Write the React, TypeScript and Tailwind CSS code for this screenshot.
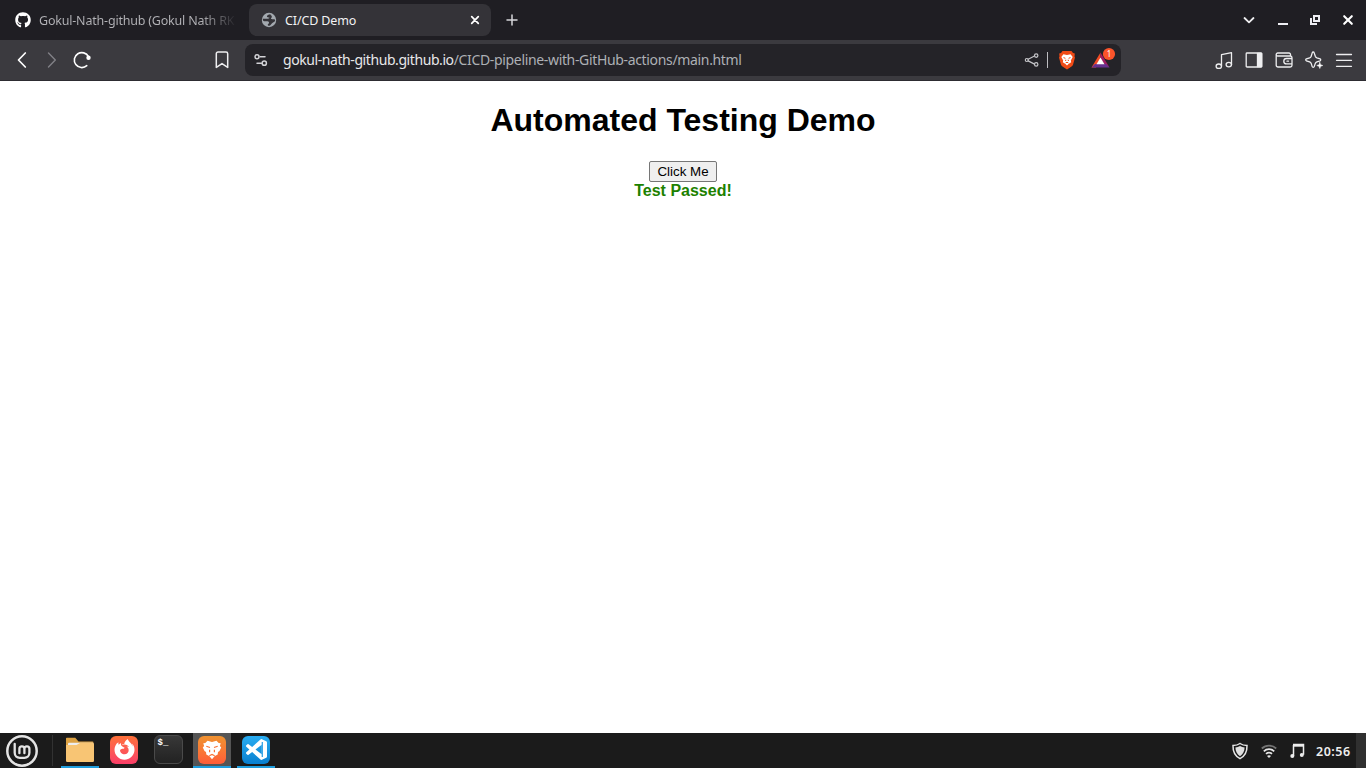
import type { ReactNode } from "react";
import { FaGithub, FaFirefoxBrowser } from "react-icons/fa";

function Cell({ children }: { children: ReactNode }) {
  return <button className="flex h-[30px] w-[30px] shrink-0 items-center justify-center">{children}</button>;
}

function Line({ d, w = 20, stroke = 1.5, color = "#eeeef0", children }: { d: string; w?: number; stroke?: number; color?: string; children?: ReactNode }) {
  return (
    <svg width={w} height={w} viewBox="0 0 20 20" fill="none" stroke={color} strokeWidth={stroke} strokeLinejoin="round" strokeLinecap="round" className="block shrink-0">
      <path d={d} />
      {children}
    </svg>
  );
}

function TabStrip() {
  return (
    <header className="flex h-10 items-center bg-[#1f1e23] font-['Noto_Sans',sans-serif] text-[12.5px] leading-5">
      <div className="flex w-[249px] items-center pl-[15px]">
        <FaGithub size={16} color="#ffffff" className="shrink-0" />
        <span className="ml-2 w-[198px] overflow-hidden whitespace-nowrap bg-linear-to-r from-[#b4b4b8] from-82% to-transparent to-100% bg-clip-text pt-px tracking-[-0.2px] text-transparent">
          Gokul-Nath-github (Gokul Nath RK
        </span>
      </div>
      <div className="flex h-8 w-[242px] items-center rounded-lg bg-[#343338] pl-3 pr-[9px]">
        <svg width="16" height="16" viewBox="0 0 16 16" className="block shrink-0">
          <circle cx="8" cy="8" r="7.200" fill="#a3a9af" />
          <path d="M9.500 2.200C7.500 2.300 5.800 3.300 5.900 4.500c.1 1 1.600.7 2.300 1.100.6.500-.2 1.100-1.200 1.200H1.900c-.3 1.300.3 2.400 1.300 2.400h3.300c1.100.2 1.600.7 1.500 1.700-.1.700-1 .8-1.200 1.600-.2.900.6 1.600 1.700 1.300 1.300-.4 1.700-2 2.800-2.800.9-.7 2.500-.9 2.800-2.400.1-.9-.7-1.400-1.700-1.300-1 0-2.200.1-2.400-.7-.2-.6.700-.9.800-1.700.1-.9-.4-1.600-1.300-1.800z" fill="#343338" />
        </svg>
        <span className="ml-2 pt-px tracking-[-0.12px] text-[#f2f2f4]">CI/CD Demo</span>
        <span className="ml-auto flex h-[14px] w-[14px] items-center justify-center">
          <Line d="M5.300 5.300l9.400 9.400M14.700 5.300l-9.400 9.400" w={14} stroke={2.500} color="#ffffff" />
        </span>
      </div>
      <div className="ml-[11px]">
        <Line d="M10 5v10M5 10h10" stroke={1.5} color="#d6d6da" />
      </div>
      <div className="ml-auto flex items-center pr-2">
        <div className="mr-[14px]">
          <Line d="M4.500 8l4.500 4.300L13.500 8" stroke={1.8} />
        </div>
        <div className="mr-3">
          <svg width="20" height="20" viewBox="0 0 20 20" className="block"><path d="M4 13h10v2H4z" fill="#eeeef3" /></svg>
        </div>
        <div className="mr-3">
          <svg width="20" height="20" viewBox="0 0 20 20" fill="none" stroke="#eeeef3" strokeWidth="2" className="block">
            <path d="M8 6h5v5H8zM5 8v6h6" />
          </svg>
        </div>
        <Line d="M6.200 6.200l7.600 7.600M13.800 6.200l-7.600 7.600" stroke={2.100} color="#ffffff" />
      </div>
    </header>
  );
}

function AddressBar() {
  return (
    <div className="ml-2 flex h-8 w-[876px] items-center rounded-lg bg-[#242328] pl-1.5 pr-[3px]">
      <Line d="M9.200 6.800H14M6 13.200h4.500" stroke={1.500} color="#d2d2d6">
        <circle cx="6" cy="6.800" r="2" />
        <circle cx="13.300" cy="13.200" r="2.100" />
      </Line>
      <span className="ml-3 whitespace-nowrap font-['Noto_Sans',sans-serif] text-[14px] leading-5 tracking-[-0.34px] text-[#adb0b5]">
        <span className="tracking-[-0.42px] text-[#e8e8ea]">gokul-nath-github.github.io</span>/CICD-pipeline-with-GitHub-actions/main.html
      </span>
      <div className="ml-auto flex items-center">
        <Line d="M6.200 9.200l5.800-3M6.200 10.900l5.800 3" stroke={1.200} color="#c6c6ca">
          <circle cx="4.800" cy="10" r="1.500" />
          <circle cx="14.200" cy="5.600" r="1.700" />
          <circle cx="14.200" cy="14.400" r="1.700" />
        </Line>
        <div className="ml-[5px] h-4 w-px bg-[#bdbdc1]" />
        <svg width="18" height="20" viewBox="0 0 18 20" className="ml-2.5 block">
          <path d="M4.500 1h9l1.500 2 1.800.5-.3 3 .5 1-2 7.300c-.5 1.500-3.500 3.200-6 4.700-2.500-1.500-5.500-3.200-6-4.700L1 7.500l.5-1-.3-3L3 3z" fill="#f04b16" />
          <path d="M5.400 4.300L9 4.900l3.600-.6L14.700 7l-1.900 3.500.4 1.800-2.700 1.700-1.500 1.500-1.500-1.500-2.700-1.700.4-1.800L3.300 7z" fill="#fff" />
          <path d="M5.500 7.600l1.900.7M12.500 7.600l-1.900.7M7.800 9.700L7.600 11M10.200 9.700l.2 1.300M7.700 12.800L9 12.300l1.300.5" stroke="#f04b16" strokeWidth="1" fill="none" />
        </svg>
        <svg width="28" height="26" viewBox="0 0 28 26" className="ml-[14px] block">
          <path d="M10.500 5.500L1.500 20.500H6l4.500-8.500z" fill="#f04b24" />
          <path d="M10.500 5.500L19.500 20.500l-4.500-3-4.500-5.500z" fill="#a01b63" />
          <path d="M1.500 20.500L5 17h11l3.500 3.500z" fill="#66308f" />
          <path d="M10.500 10.500L6.500 17.200h8z" fill="#fff" />
          <circle cx="19" cy="7" r="6.100" fill="#fb542b" />
          <text x="19" y="10" textAnchor="middle" fontSize="8" fontFamily="Noto Sans" fill="#fff">1</text>
        </svg>
      </div>
    </div>
  );
}

function Toolbar() {
  return (
    <nav className="flex h-[41px] items-center border-b border-[#2d2c31] bg-[#3b3a3f] pl-[7px]">
      <Cell><Line d="M13.300 3L6.500 10l6.800 7" stroke={1.700} color="#ffffff" /></Cell>
      <Cell><Line d="M6.500 3l6.800 7-6.800 7" stroke={1.400} color="#818086" /></Cell>
      <Cell>
        <Line d="M14.800 15.700a7.500 7.500 0 1 1 1.700-9" stroke={1.600} color="#ffffff">
          <circle cx="16.500" cy="7.800" r="1.400" fill="#fff" />
        </Line>
      </Cell>
      <div className="ml-[110px]"><Cell><Line d="M4.300 17.400V3.700A1.700 1.700 0 0 1 6 2h8a1.700 1.700 0 0 1 1.700 1.700v13.700L10 13.600z" /></Cell></div>
      <AddressBar />
      <div className="ml-auto flex pr-[7px]">
        <Cell>
          <Line d="M7.500 16V4.700l10-2v12" stroke={1.300}>
            <ellipse cx="4.800" cy="16.200" rx="2.700" ry="2.200" />
            <ellipse cx="14.800" cy="14.600" rx="2.700" ry="2.200" />
          </Line>
        </Cell>
        <Cell>
          <Line d="M3 3h14a.8.8 0 0 1 .8.8v12.400a.8.8 0 0 1-.8.8H3a.8.8 0 0 1-.8-.8V3.800A.8.8 0 0 1 3 3z" stroke={1.300}>
            <path d="M13.500 3.300h4v13.400h-4z" fill="#eeeef0" />
          </Line>
        </Cell>
        <Cell>
          <Line d="M16.500 5.700V4.500A1.500 1.500 0 0 0 15 3H3.700a1.500 1.500 0 0 0 0 3h12.500A1.800 1.800 0 0 1 18 7.800v7.400a1.800 1.800 0 0 1-1.800 1.800H4a1.800 1.800 0 0 1-1.800-1.800V4.500M18 8.500h-5.500a2.700 2.700 0 0 0 0 5.400H18M13 11.200h1.500" stroke={1.300} />
        </Cell>
        <Cell>
          <Line d="M9.200 2c.6 0 .8.300 1 .9l1.100 3.300c.3.800.8 1.300 1.600 1.600l3.200 1.100c.8.300.8 1.600 0 1.900l-3.200 1c-.8.300-1.300.8-1.600 1.600l-1.100 3.200c-.3.900-1.700.9-2 0l-1-3.200c-.3-.8-.8-1.300-1.600-1.600l-3.200-1c-.9-.3-.9-1.600 0-1.900l3.200-1.100c.8-.3 1.300-.8 1.600-1.600l1-3.300c.2-.6.400-.9 1-.9z" stroke={1.300}>
            <path d="M15.800 12.500l.8 2.200 2.200.8-2.200.8-.8 2.200-.8-2.200-2.200-.8 2.200-.8z" fill="#fff" strokeWidth=".6" />
          </Line>
        </Cell>
        <Cell><Line d="M2.500 4.500h15M2.500 10.300h15M2.500 16.300h15" stroke={1.300} /></Cell>
      </div>
    </nav>
  );
}

function Task({ open, active, children }: { open?: boolean; active?: boolean; children: ReactNode }) {
  return (
    <div className={`mr-1.5 flex h-[35px] w-[38px] flex-col items-center pt-[2px] ${active ? "bg-[#555555]" : ""}`}>
      <div className="flex h-[29px] w-[30px] shrink-0 items-center justify-center">{children}</div>
      <div className={`mt-[2px] h-[2px] w-full shrink-0 ${open ? "bg-[#1f9ede]" : ""}`} />
    </div>
  );
}

function Taskbar() {
  return (
    <footer className="flex h-[35px] items-center bg-[#1b1b1b]">
      <div className="flex h-8 w-11 items-center pl-[6px]">
        <svg width="32" height="32" viewBox="0 0 32 32" fill="none" stroke="#e4e4e4" className="block shrink-0">
          <circle cx="16" cy="16" r="14.700" strokeWidth="2.500" />
          <path d="M8.700 9v8.800a5 5 0 0 0 5 5h4.700a5 5 0 0 0 5-5v-4a2.500 2.500 0 0 0-5 0v4.400m0-4.400a2.500 2.500 0 0 0-5 0v4.400" strokeWidth="2.300" strokeLinecap="round" />
        </svg>
      </div>
      <div className="ml-2 mr-2 h-[31px] w-px bg-[#323232]" />
      <Task open>
        <svg width="30" height="28" viewBox="0 0 30 28" className="block">
          <path d="M1 2.500a.8.800 0 0 1 .8-.8h8.500l3.200 3.800h14a1 1 0 0 1 1 1V22H1z" fill="#dda243" />
          <path d="M3 7.800a1 1 0 0 1 1-1h23.500a1 1 0 0 1 1 1V12H3z" fill="#eeeeee" />
          <path d="M1 9h10.500l3.500-2h12.500a1.500 1.500 0 0 1 1.500 1.500v16.300a1.200 1.200 0 0 1-1.200 1.200H2.200A1.200 1.200 0 0 1 1 24.800z" fill="#f8c574" />
        </svg>
      </Task>
      <Task>
        <div className="flex h-[28px] w-[28px] items-center justify-center rounded-[6px] bg-linear-to-b from-[#ff7139] to-[#fa3d67]">
          <FaFirefoxBrowser size={21} color="#ffffff" />
        </div>
      </Task>
      <Task>
        <div className="h-[29px] w-[29px] rounded-[6px] border border-[#4a4a4a] bg-linear-to-b from-[#383838] to-[#222222] pl-[3px] pt-[2px] font-['Liberation_Mono',monospace] text-[9px] font-bold leading-[10px] text-white">
          $_
        </div>
      </Task>
      <Task open active>
        <div className="flex h-[28px] w-[28px] items-center justify-center rounded-[6px] bg-linear-to-b from-[#ef9230] to-[#ff5c38]">
          <svg width="22" height="22" viewBox="0 0 22 22" className="block">
            <path d="M6.500 1.800L11 3l4.500-1.200L17.700 4l2 .3-.8 2.700 1.300 1.500-1.700 3.500-1.500 1-.3 2.500-3.200 1.800L11 20.200l-2.500-2.900-3.200-1.800L5 13l-1.500-1L1.800 8.500 3.100 7l-.8-2.700 2-.3z" fill="#fff" />
            <path d="M5.300 7.300l3.700 1.200M16.700 7.300L13 8.500M8.600 10.800v2.400M13.400 10.800v2.400M8.300 16.700l2.700-1.200 2.700 1.200" fill="none" stroke="#fa7134" strokeWidth="1.200" />
          </svg>
        </div>
      </Task>
      <Task open>
        <div className="flex h-[28px] w-[28px] items-center justify-center rounded-[6px] bg-linear-to-b from-[#29adf2] to-[#087fcf]">
          <svg width="21" height="21" viewBox="0 0 24 24" className="block">
            <path d="M23.150 2.587L18.210.21a1.494 1.494 0 0 0-1.705.29l-9.460 8.630-4.120-3.128a.999.999 0 0 0-1.276.057L.327 7.261A1 1 0 0 0 .326 8.740L3.899 12 .326 15.260a1 1 0 0 0 .001 1.479L1.650 17.940a.999.999 0 0 0 1.276.057l4.120-3.128 9.460 8.630a1.492 1.492 0 0 0 1.704.29l4.942-2.377A1.500 1.500 0 0 0 24 20.060V3.939a1.500 1.500 0 0 0-.85-1.352zm-5.146 14.861L10.826 12l7.178-5.448v10.896z" fill="#fff" />
            <path d="M18.600 3.500v17" stroke="#1997e2" strokeWidth="1.300" />
          </svg>
        </div>
      </Task>
      <div className="ml-auto flex h-full items-center">
        <svg width="18" height="18" viewBox="0 0 18 18" className="block">
          <path d="M9 1.500c2 1.400 4.300 2 7 2 .2 6-1.500 10.300-7 13.200C3.500 13.800 1.800 9.500 2 3.500c2.700 0 5-.6 7-2z" fill="none" stroke="#e6e6e6" strokeWidth="1.500" />
          <path d="M9 4c1.400.9 3 1.400 4.600 1.600-.2 4-1.500 6.600-4.600 8.600-3.100-2-4.400-4.600-4.600-8.600C6 5.400 7.600 4.900 9 4z" fill="#e0e0e0" />
        </svg>
        <svg width="16" height="16" viewBox="0 0 16 16" fill="none" stroke="#e6e6e6" strokeWidth="1.800" className="ml-3 block">
          <path d="M.8 5.500c4-3.800 10.400-3.800 14.400 0" stroke="#747474" />
          <path d="M2.800 8.300c3-2.800 7.400-2.800 10.400 0M5 10.900c1.800-1.500 4.200-1.500 6 0" />
          <path d="M6 13c1-1 3-1 4 0l-2 2z" fill="#e6e6e6" stroke="none" />
        </svg>
        <svg width="16" height="16" viewBox="0 0 16 16" className="ml-3 block">
          <path d="M4 1.500h10.500v10.200M4.500 13V2" fill="none" stroke="#ededed" strokeWidth="1.500" />
          <path d="M4 1.200h11v2.500H4z" fill="#ededed" />
          <circle cx="3.300" cy="12.900" r="2" fill="#ededed" />
          <circle cx="12.800" cy="11.900" r="2" fill="#ededed" />
        </svg>
        <span className="ml-[11px] w-[35px] whitespace-nowrap pt-[2px] font-['Noto_Sans',sans-serif] text-[12.5px] font-semibold leading-5 tracking-[0.5px] text-[#eeeeee]">20:56</span>
        <div className="ml-[5px] h-full w-[10px] bg-[#303030]" />
      </div>
    </footer>
  );
}

export default function App() {
  return (
    <div className="flex h-[768px] w-[1366px] flex-col overflow-hidden bg-white">
      <TabStrip />
      <Toolbar />
      <main className="flex flex-1 flex-col items-center pt-[21px] font-['Liberation_Sans',Arial,sans-serif] text-black">
        <h1 className="text-[32px] font-bold leading-[37px]">Automated Testing Demo</h1>
        <button className="mt-[22px] h-[21px] w-[68px] rounded-[2px] border border-[#767676] bg-[#efefef] text-[13.333px] leading-[19px]">Click Me</button>
        <p className="text-[16px] font-bold leading-[18px] text-[#1d8100]">Test Passed!</p>
      </main>
      <Taskbar />
    </div>
  );
}
